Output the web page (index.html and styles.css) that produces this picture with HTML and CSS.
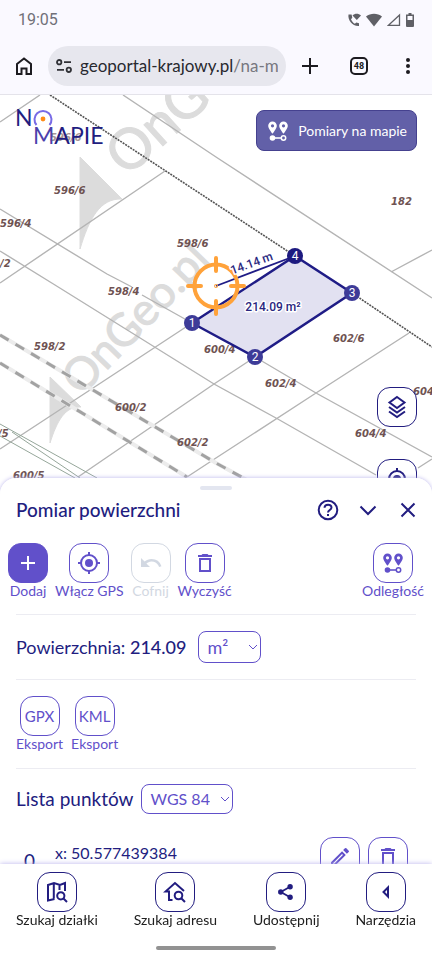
FILE: index.html
```html
<!DOCTYPE html>
<html lang="pl">
<head>
<meta charset="utf-8">
<meta name="viewport" content="width=device-width, initial-scale=1">
<title>Na mapie</title>
<link rel="stylesheet" href="styles.css">
</head>
<body>
<svg class="defs" aria-hidden="true">
  <symbol id="pins" viewBox="0 0 24 24">
    <path fill="currentColor" fill-rule="evenodd" d="M6.500 2.500a4.300 4.300 0 0 0-4.300 4.300c0 2.800 4.300 8 4.300 8s4.300-5.200 4.300-8a4.300 4.300 0 0 0-4.300-4.300zm0 2.700a1.600 1.600 0 1 1 0 3.200 1.600 1.600 0 0 1 0-3.200zM17.500 2.500a4.300 4.300 0 0 0-4.300 4.300c0 2.800 4.300 8 4.300 8s4.300-5.200 4.300-8a4.300 4.300 0 0 0-4.300-4.300zm0 2.700a1.600 1.600 0 1 1 0 3.200 1.600 1.600 0 0 1 0-3.200z"/>
    <circle cx="6.500" cy="19" r="2.800" fill="currentColor"/>
    <path d="M8 19h7" stroke="currentColor" stroke-width="1.600"/>
    <circle cx="17.500" cy="19" r="2.200" fill="none" stroke="currentColor" stroke-width="1.500"/>
  </symbol>
  <symbol id="gps" viewBox="0 0 24 24">
    <circle cx="12" cy="12" r="4" fill="currentColor"/>
    <g fill="none" stroke="currentColor" stroke-width="2"><circle cx="12" cy="12" r="8"/><path d="M12 1v3M12 20v3M1 12h3M20 12h3"/></g>
  </symbol>
  <symbol id="trash" viewBox="0 0 24 24">
    <path d="M7 8h10v12H7z" fill="none" stroke="currentColor" stroke-width="2"/>
    <path d="M5 4h3.500l1-1h5l1 1H19v2H5z" fill="currentColor"/>
  </symbol>
</svg>

<header class="chrome">
  <div class="status">
    <time>19:05</time>
    <div class="status-icons">
      <svg width="14" height="14" viewBox="0 0 14 14" fill="#5f6066"><path d="M1.500 1.500C.5 7 5.500 13.500 12 13v-2.800l-2.700-.8-1.400 1.300C6 9.700 4.700 8 4 6.200l1.300-1.400L4.600 1.500zM5.500 2.400C7.800.3 11.500.3 14 2.400L9.800 7z"/></svg>
      <svg width="16" height="14" viewBox="0 0 16 14" fill="#5f6066"><path d="M0 3.500C4.500-.2 11.500-.2 16 3.500L8 13.500z"/></svg>
      <svg width="14" height="14" viewBox="0 0 14 14" fill="none" stroke="#5f6066" stroke-width="1.300"><path d="M1.500 12.300h11V2z"/></svg>
      <svg width="8" height="14" viewBox="0 0 8 14"><path d="M2.500 0h3v1.500H8V13a1 1 0 0 1-1 1H1a1 1 0 0 1-1-1V1.500h2.500z" fill="#5f6066"/><path d="M1.500 3h5v4h-5z" fill="#faf9ff"/></svg>
    </div>
  </div>
  <div class="browser-bar">
    <button class="plain" aria-label="Strona główna"><svg width="20" height="20" viewBox="0 0 20 20" fill="none" stroke="#1c1b20" stroke-width="2"><path d="M3 8l7-5.500L17 8v10h-4.500v-5.500h-5V18H3z"/></svg></button>
    <button class="address" aria-label="Pasek adresu">
      <svg width="16" height="14" viewBox="0 0 16 14" fill="none" stroke="#303136" stroke-width="1.800"><circle cx="3.200" cy="3.200" r="2.200"/><path d="M8 3.200h7M1 10.800h7"/><circle cx="12.800" cy="10.800" r="2.200"/></svg>
      <span class="url">geoportal-krajowy.pl<span class="path">/na-mapie</span></span>
    </button>
    <button class="plain" aria-label="Nowa karta"><svg width="18" height="18" viewBox="0 0 18 18" stroke="#1c1b20" stroke-width="2"><path d="M9 1v16M1 9h16"/></svg></button>
    <button class="plain" aria-label="Karty"><span class="tabs">48</span></button>
    <button class="plain" aria-label="Menu"><svg width="6" height="18" viewBox="0 0 6 18" fill="#1c1b20"><circle cx="3" cy="3" r="2"/><circle cx="3" cy="9" r="2"/><circle cx="3" cy="15" r="2"/></svg></button>
  </div>
</header>

<main class="map">
  <svg class="map-canvas" viewBox="0 95 432 400" preserveAspectRatio="xMidYMin slice" role="img" aria-label="Mapa działek">
    <g class="watermark">
      <text font-size="56" transform="translate(127 178) rotate(-42)">OnGeo.pl</text>
      <path d="M80 157l42 42c-22-1-33 20-42 50z"/>
      <text font-size="45" transform="translate(81 397) rotate(-46)">OnGeo.pl</text>
      <path d="M50 377l31 30c-16-1-24 14-31 36z"/>
    </g>
    <g class="parcel-lines">
      <path d="M0 122L40 95M123 95L216 157 432 298M391 272l41-22M165 171L0 283M0 209l107 65 25 13M142 295l50 28M0 251l55 34 159 99 62 34 100 57M192 323L90 390 0 449M78 477l136-93 41-27M187 477l29-19 100-65 93-60M255 357l61 36 116 64M418 468l14-9"/>
      <path class="green" d="M0 424l97 54M12 432l68 46M0 436l75 42"/>
      <path class="road-bed" d="M0 335l216 128 40 22M0 363l187 114"/>
      <path class="road" d="M0 335l216 128 40 22M0 363l187 114"/>
      <path class="dotted" d="M50 95l166 109 79 52M352 293l80 54"/>
    </g>
    <g class="parcel-labels">
      <text x="50" y="141" opacity=".6">596/6</text><text x="54" y="194">596/6</text><text x="0" y="227">596/4</text><text x="0" y="267">/2</text>
      <text x="177" y="247">598/6</text><text x="391" y="205">182</text><text x="108" y="295">598/4</text><text x="34" y="350">598/2</text>
      <text x="115" y="411">600/2</text><text x="177" y="446">602/2</text><text x="13" y="479">600/5</text><text x="-2" y="437">/5</text>
      <text x="204" y="353">600/4</text><text x="333" y="342">602/6</text><text x="265" y="387">602/4</text><text x="355" y="437">604/4</text><text x="413" y="395">604</text>
    </g>
    <path class="area" d="M192 323l103-67 57 37-97 64z"/>
    <path d="M216 286l79-30" stroke="#1f1c86" stroke-width="1.800"/>
    <g class="target">
      <circle cx="216" cy="286" r="21.500"/><path d="M216 258v13M216 301v13M188 286h13M231 286h13"/><circle cx="216" cy="286" r=".5"/>
    </g>
    <g class="nodes">
      <circle cx="192" cy="323" r="8"/><circle cx="255" cy="357" r="8"/><circle cx="352" cy="293" r="8"/><circle class="last" cx="295" cy="256" r="8"/>
      <text x="192" y="327">1</text><text x="255" y="361">2</text><text x="352" y="297">3</text><text x="295" y="260">4</text>
    </g>
    <g class="measures">
      <text transform="translate(253 267) rotate(-20)">14.14 m</text>
      <text x="273" y="311">214.09 m²</text>
    </g>
  </svg>
  <a class="logo" href="#" aria-label="Na mapie">
    <span class="logo-top">N<svg width="20" height="18" viewBox="0 0 20 18" fill="none"><path d="M3.500 16A8.500 8.500 0 1 1 16.500 16" stroke="#786be6" stroke-width="2"/><circle cx="10" cy="10" r="2.400" fill="#ff8b17"/></svg></span>
    <span class="logo-bottom"><span class="violet">M</span>APIE</span>
  </a>
  <button class="measure"><svg width="24" height="24"><use href="#pins"/></svg>Pomiary na mapie</button>
  <div class="map-tools">
    <button class="box navy" aria-label="Warstwy"><svg width="24" height="24" viewBox="0 0 24 24" fill="none" stroke="currentColor" stroke-width="2"><path d="M12 2l7.500 5.500L12 13 4.500 7.500zM4 12l8 5.500 8-5.500M4 16.500l8 5.500 8-5.500"/></svg></button>
    <button class="box navy" aria-label="Moja lokalizacja"><svg width="24" height="24"><use href="#gps"/></svg></button>
  </div>
</main>

<section class="sheet">
  <div class="handle"></div>
  <div class="sheet-head">
    <h1>Pomiar powierzchni</h1>
    <button class="plain navy" aria-label="Pomoc"><svg width="22" height="22" viewBox="0 0 22 22" fill="none" stroke="currentColor" stroke-width="2"><circle cx="11" cy="11" r="9.300"/><path d="M7.500 8.700c.2-4 7-4 7-.2 0 2.500-3.500 2.400-3.500 5"/><path d="M11 15v2"/></svg></button>
    <button class="plain navy" aria-label="Zwiń"><svg width="18" height="18" viewBox="0 0 18 18" fill="none" stroke="currentColor" stroke-width="2"><path d="M1.500 5.500L9 13l7.500-7.500"/></svg></button>
    <button class="plain navy" aria-label="Zamknij"><svg width="16" height="16" viewBox="0 0 16 16" stroke="currentColor" stroke-width="2"><path d="M1.500 1.500l13 13M14.500 1.500l-13 13"/></svg></button>
  </div>
  <div class="tools">
    <button class="tool"><span class="box filled"><svg width="24" height="24" viewBox="0 0 24 24" stroke="currentColor" stroke-width="2"><path d="M12 5v14M5 12h14"/></svg></span>Dodaj</button>
    <button class="tool"><span class="box"><svg width="24" height="24"><use href="#gps"/></svg></span>Włącz GPS</button>
    <button class="tool" disabled><span class="box"><svg width="24" height="24" viewBox="0 0 24 24" fill="currentColor"><path d="M12.500 8c-2.650 0-5.050.99-6.900 2.600L2 7v9h9l-3.620-3.620A8 8 0 0 1 20.100 16l2.370-.78A10.500 10.500 0 0 0 12.500 8z"/></svg></span>Cofnij</button>
    <button class="tool"><span class="box"><svg width="24" height="24"><use href="#trash"/></svg></span>Wyczyść</button>
    <button class="tool end"><span class="box"><svg width="24" height="24"><use href="#pins"/></svg></span>Odległość</button>
  </div>
  <div class="block area-row">
    <label for="unit">Powierzchnia: <strong>214.09</strong></label>
    <span class="select big"><select id="unit"><option>m²</option><option>ha</option></select><svg width="10" height="6" viewBox="0 0 10 6" fill="none" stroke="currentColor"><path d="M1 1l4 4 4-4"/></svg></span>
  </div>
  <div class="block exports">
    <button class="tool"><span class="box">GPX</span>Eksport</button>
    <button class="tool"><span class="box">KML</span>Eksport</button>
  </div>
  <div class="block list-row">
    <label for="crs">Lista punktów</label>
    <span class="select"><select id="crs"><option>WGS 84</option><option>PL-1992</option></select><svg width="10" height="6" viewBox="0 0 10 6" fill="none" stroke="currentColor"><path d="M1 1l4 4 4-4"/></svg></span>
  </div>
  <div class="point">
    <span class="number">0</span>
    <span class="coords">x: 50.577439384</span>
    <button class="box" aria-label="Edytuj"><svg width="24" height="24" viewBox="0 0 24 24" fill="currentColor"><path d="M3 17.250V21h3.750L17.810 9.940l-3.750-3.750zm2.900 1.800l-.9-.9 9.060-9.060.9.900zM20.700 7.040a1 1 0 0 0 0-1.410l-2.330-2.340a1 1 0 0 0-1.410 0l-1.830 1.830 3.750 3.750z"/></svg></button>
    <button class="box" aria-label="Usuń"><svg width="24" height="24"><use href="#trash"/></svg></button>
  </div>
</section>

<footer class="bottom">
  <nav>
    <a href="#"><span class="box navy"><svg width="24" height="24" viewBox="0 0 24 24" fill="none" stroke="currentColor" stroke-width="2"><path d="M9.500 19L3 20.500V5l6-2 6 2 5-2v8M8.800 3v15.500M14.500 5v5"/><circle cx="15.800" cy="15.800" r="3.600"/><path d="M18.500 18.500L22 22"/></svg></span>Szukaj działki</a>
    <a href="#"><span class="box navy"><svg width="24" height="24" viewBox="0 0 24 24" fill="none" stroke="currentColor" stroke-width="2"><path d="M9.500 20H6v-8.500H2.500L12 3l9 8"/><circle cx="15.500" cy="15.500" r="3.800"/><path d="M18.200 18.200L22 22"/></svg></span>Szukaj adresu</a>
    <a href="#"><span class="box navy"><svg width="18" height="18" viewBox="0 0 24 24" fill="currentColor"><circle cx="5" cy="12" r="3.600"/><circle cx="17.500" cy="5" r="3.600"/><circle cx="17.500" cy="19" r="3.600"/><path d="M17.500 5L5 12l12.500 7" fill="none" stroke="currentColor" stroke-width="2.400"/></svg></span>Udostępnij</a>
    <a href="#"><span class="box navy"><svg width="20" height="20" viewBox="0 0 20 20" fill="none" stroke="currentColor" stroke-width="2"><path d="M12 5.500v9L7.500 10z"/></svg></span>Narzędzia</a>
  </nav>
  <div class="home-bar"></div>
</footer>
</body>
</html>
```
FILE: styles.css
```css
* { box-sizing: border-box; }

:root {
  --navy: #221d80;
  --violet: #6150ca;
  --line: #ececf2;
}

body {
  margin: 0;
  height: 100vh;
  display: flex;
  flex-direction: column;
  overflow: hidden;
  background: #fff;
  color: var(--navy);
  font-family: Lato, "Open Sans", sans-serif;
}

svg { display: block; flex: none; }
.defs { position: absolute; width: 0; height: 0; }

button, select {
  margin: 0;
  padding: 0;
  border: 0;
  background: none;
  color: inherit;
  font: inherit;
}

.plain {
  display: grid;
  place-items: center;
  flex: none;
  width: 24px;
  height: 24px;
}

.navy { color: var(--navy); }

.box {
  display: grid;
  place-items: center;
  flex: none;
  width: 40px;
  height: 40px;
  border: 1px solid currentColor;
  border-radius: 13px;
  background: #fff;
}

.box.filled {
  border-color: var(--violet);
  background: var(--violet);
  color: #fff;
}

/* Browser chrome */
.chrome {
  flex: none;
  background: #faf9ff;
  border-bottom: 1px solid #e4e3ea;
}

.status {
  display: flex;
  justify-content: space-between;
  align-items: center;
  height: 40px;
  padding: 0 18px;
  color: #707078;
  font: 16px/20px Roboto, sans-serif;
}

.status-icons { display: flex; align-items: center; gap: 5px; }

.browser-bar {
  display: flex;
  align-items: center;
  height: 54px;
  padding: 0 12px 2px;
  gap: 25px;
}

.address {
  display: flex;
  align-items: center;
  gap: 8px;
  flex: 1;
  min-width: 0;
  height: 40px;
  margin: 0 -13px;
  padding: 0 8px;
  border-radius: 20px;
  background: #e7e7ee;
}

.url {
  flex: 1;
  overflow: hidden;
  white-space: nowrap;
  text-align: left;
  color: #28292e;
  font: 17px/24px Lato, sans-serif;
}

.path { color: #77777f; }

.tabs {
  display: grid;
  place-items: center;
  width: 18px;
  height: 18px;
  border: 2px solid #1c1b20;
  border-radius: 5px;
  color: #1c1b20;
  font: bold 9px/10px Roboto, sans-serif;
}

/* Map */
.map {
  position: relative;
  flex: none;
  height: 41vh;
  background: #fff;
}

.map-canvas { width: 100%; height: 100%; }

.watermark {
  fill: #dcdcdc;
  stroke: #dcdcdc;
  font-family: Lato, sans-serif;
}

.parcel-lines path { fill: none; stroke: #b4b4b4; stroke-width: 1.4; }
.parcel-lines .green { stroke: #95a69a; stroke-width: 1; }
.parcel-lines .road-bed { stroke: #ececec; stroke-width: 4; }
.parcel-lines .road { stroke: #a2a2a2; stroke-width: 3; stroke-dasharray: 10 8; }
.parcel-lines .dotted { stroke: #555; stroke-width: 1.6; stroke-dasharray: 2 1; }

.parcel-labels {
  fill: #6e5252;
  font: italic bold 10px "DejaVu Sans", sans-serif;
}

.area {
  fill: #dddcee;
  fill-opacity: .85;
  stroke: #1f1c86;
  stroke-width: 2.5;
}

.target { fill: none; stroke: #ffa23a; stroke-width: 4; stroke-linecap: round; }
.target circle:last-child { stroke-width: 3; }
.nodes circle { fill: #3d3b98; }
.nodes .last { fill: #1d1a80; }
.nodes text { fill: #fff; font: 12px Roboto, sans-serif; text-anchor: middle; }

.measures {
  fill: #2a2780;
  stroke: #fff;
  stroke-width: 3px;
  stroke-linejoin: round;
  paint-order: stroke;
  font: 500 12px Roboto, sans-serif;
  text-anchor: middle;
}

.logo {
  position: absolute;
  left: 15px;
  top: 14px;
  display: flex;
  flex-direction: column;
  color: var(--navy);
  font-size: 23px;
  line-height: 16px;
  text-decoration: none;
}

.logo-top { display: flex; }
.logo-bottom { padding-left: 18px; }
.violet { color: #4b40ac; }

.measure {
  position: absolute;
  right: 15px;
  top: 15px;
  display: flex;
  align-items: center;
  gap: 8px;
  height: 41px;
  padding: 0 9px;
  border: 1px solid #45418f;
  border-radius: 8px;
  background: #6260a8;
  color: #fff;
  font-size: 14px;
}

.map-tools {
  position: absolute;
  right: 15px;
  bottom: -10px;
  display: grid;
  gap: 32px;
}

/* Bottom sheet */
.sheet {
  position: relative;
  flex: 1;
  min-height: 0;
  margin-top: -11px;
  overflow: hidden auto;
  scrollbar-width: none;
  border-radius: 16px 16px 0 0;
  background: #fff;
  box-shadow: 0 0 4px #b9b3ec;
}

.handle {
  width: 32px;
  height: 4px;
  margin: 8px auto 0;
  border-radius: 2px;
  background: #e3e6f0;
}

.sheet-head {
  display: flex;
  align-items: center;
  gap: 16px;
  height: 40px;
  padding: 0 12px 0 16px;
}

h1 { flex: 1; margin: 0; font-size: 19px; line-height: 24px; font-weight: 500; }

.tools {
  display: flex;
  gap: 7px;
  padding: 13px 8px 15px;
}

.tool {
  display: flex;
  flex-direction: column;
  align-items: center;
  color: var(--violet);
  font-size: 14px;
  line-height: 16px;
}

.tool:disabled { color: #d2d8e2; }
.tool.end { margin-left: auto; }

.block {
  display: flex;
  align-items: center;
  margin: 0 16px;
  border-top: 1px solid var(--line);
}

.area-row { gap: 12px; padding: 16px 0; font-size: 18px; }
.area-row strong { font-weight: 500; }

.select { position: relative; display: flex; align-items: center; color: var(--violet); }

.select select {
  appearance: none;
  height: 30px;
  padding: 0 22px 0 8px;
  border: 1px solid currentColor;
  border-radius: 8px;
  font-size: 16px;
}

.select.big select { height: 32px; padding-right: 32px; font-size: 18px; }
.select svg { position: absolute; right: 3px; pointer-events: none; }

.exports { gap: 8px; padding: 16px 0; }
.exports .box { font-size: 15px; }

.list-row { gap: 8px; padding: 15px 0; font-size: 19px; }

.point {
  display: flex;
  align-items: flex-start;
  gap: 8px;
  padding: 8px 24px 0;
  color: var(--violet);
}

.number { width: 23px; padding-top: 12px; color: var(--navy); font-size: 19px; }
.coords { flex: 1; padding-top: 6px; color: var(--navy); font-size: 16px; line-height: 20px; }

/* Bottom navigation */
.bottom {
  position: relative;
  flex: none;
  padding: 8px 16px 10px;
  background: #fff;
  box-shadow: 0 0 5px #b9b3ec;
}

nav { display: flex; justify-content: space-between; }

nav a {
  display: flex;
  flex-direction: column;
  align-items: center;
  color: #202020;
  font-size: 14px;
  line-height: 16px;
  text-decoration: none;
}

.home-bar {
  width: 120px;
  height: 4px;
  margin: 18px auto 0;
  border-radius: 2px;
  background: #929292;
}
```
